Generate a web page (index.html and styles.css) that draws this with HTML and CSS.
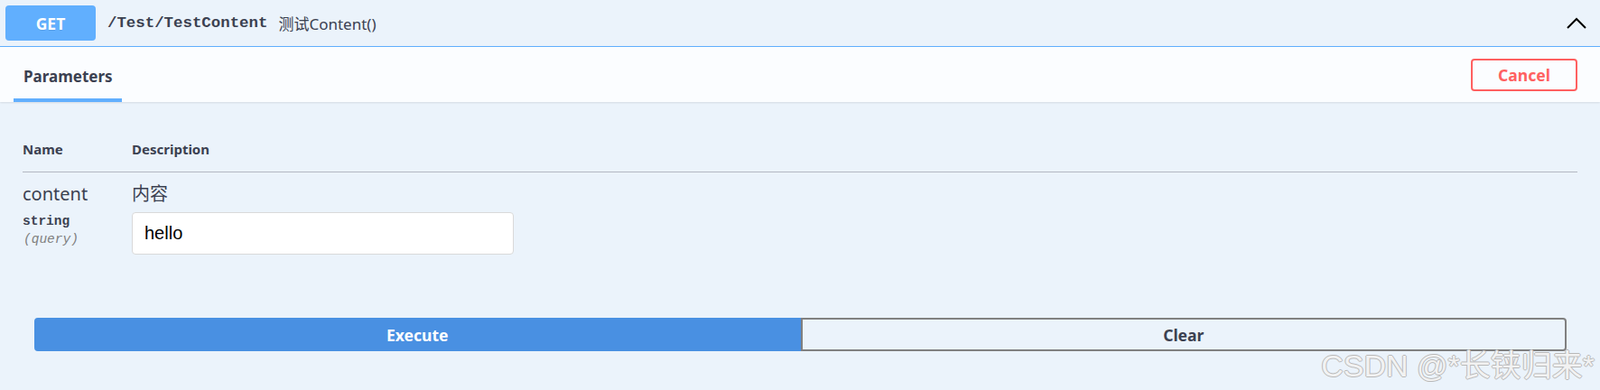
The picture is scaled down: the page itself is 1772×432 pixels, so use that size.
FILE: index.html
```html
<!DOCTYPE html>
<html lang="zh">
<head>
<meta charset="utf-8">
<title>Swagger - GET /Test/TestContent</title>
<link rel="stylesheet" href="styles.css">
</head>
<body>
<div class="opblock">
  <div class="summary">
    <span class="method">GET</span>
    <span class="path">/Test/TestContent</span>
    <span class="desc">测试Content()</span>
    <svg class="chev" width="22" height="13" viewBox="0 0 22 13" aria-hidden="true">
      <polyline points="1,12 11,2 21,12" fill="none" stroke="#000" stroke-width="2"/>
    </svg>
  </div>
  <div class="section-header">
    <div class="tab">Parameters</div>
    <button class="cancel">Cancel</button>
  </div>
  <div class="params">
    <div class="thead">
      <div class="col-name">Name</div>
      <div class="col-desc">Description</div>
    </div>
    <div class="row">
      <div class="col-name">
        <div class="pname">content</div>
        <div class="ptype">string</div>
        <div class="pin">(query)</div>
      </div>
      <div class="col-desc">
        <div class="pdesc">内容</div>
        <input class="pinput" type="text" value="hello">
      </div>
    </div>
  </div>
  <div class="btn-group">
    <button class="execute">Execute</button>
    <button class="clear">Clear</button>
  </div>
</div>
<div class="watermark">CSDN @*长铗归来*</div>
</body>
</html>
```
FILE: styles.css
```css
html, body {
  margin: 0;
  padding: 0;
}
body {
  background: #ebf3fb;
  font-family: "Noto Sans", "Noto Sans CJK SC", sans-serif;
  color: #3b4151;
  width: 1772px;
  height: 432px;
  overflow: hidden;
}
.opblock {
  display: flex;
  flex-direction: column;
}
.summary {
  display: flex;
  align-items: center;
  height: 51px;
  padding: 0 15px 0 6px;
  border-bottom: 1px solid #61affe;
}
.method {
  width: 100px;
  height: 39px;
  box-sizing: border-box;
  background: #61affe;
  color: #fff;
  border-radius: 4px;
  font-weight: 700;
  font-size: 17.5px;
  display: flex;
  align-items: center;
  justify-content: center;
  text-shadow: 0 1px 0 rgba(0,0,0,.1);
}
.path {
  font-family: "Liberation Mono", monospace;
  font-weight: 600;
  font-size: 17.4px;
  margin-left: 13px;
  color: #3b4151;
}
.desc {
  font-size: 17px;
  margin-left: 12px;
  flex: 1;
  color: #3b4151;
}
.chev {
  display: block;
  margin-top: -1px;
}
.section-header {
  display: flex;
  align-items: center;
  justify-content: space-between;
  height: 61px;
  padding: 0 25px 0 15px;
  background: #fbfdff;
  box-shadow: 0 1px 2px rgba(0,0,0,.1);
  position: relative;
}
.tab {
  align-self: stretch;
  box-sizing: border-box;
  padding: 7px 10px 0 11px;
  display: flex;
  align-items: center;
  border-bottom: 4px solid #61affe;
  font-weight: 700;
  font-size: 17px;
}
.cancel {
  width: 118px;
  height: 36px;
  box-sizing: border-box;
  border: 2px solid #ff6060;
  border-radius: 4px;
  background: transparent;
  color: #ff6060;
  font-family: inherit;
  font-weight: 700;
  font-size: 17.5px;
  padding: 0;
}
.params {
  padding: 0 25px;
}
.thead {
  display: flex;
  margin-top: 42px;
  padding-bottom: 15px;
  border-bottom: 1px solid #b3b8c1;
  font-weight: 700;
  font-size: 15px;
  line-height: 20px;
}
.col-name {
  width: 121px;
  flex: none;
}
.col-desc {
  flex: 1;
}
.row {
  display: flex;
  padding-top: 12px;
}
.pname {
  font-size: 20px;
  line-height: 24px;
}
.ptype {
  margin-top: 8px;
  font-family: "Liberation Mono", monospace;
  font-weight: 600;
  font-size: 14.5px;
  line-height: 20px;
}
.pin {
  font-family: "Liberation Mono", monospace;
  font-style: italic;
  font-size: 14.5px;
  line-height: 20px;
  color: #808080;
  padding-left: 1px;
}
.pdesc {
  font-size: 20px;
  line-height: 24px;
}
.pinput {
  display: block;
  margin: 8px 0 0;
  width: 423px;
  height: 47px;
  box-sizing: border-box;
  border: 1px solid #d9d9d9;
  border-radius: 4px;
  background: #fff;
  padding: 0 13px;
  font-family: "Liberation Sans", Arial, sans-serif;
  font-size: 20px;
  color: #000;
  outline: none;
}
.btn-group {
  display: flex;
  margin: 70px 37px 0 38px;
}
.btn-group button {
  flex: 1;
  height: 37px;
  box-sizing: border-box;
  font-family: inherit;
  font-weight: 700;
  font-size: 17.5px;
  padding: 0;
}
.execute {
  background: #4990e2;
  color: #fff;
  border: 2px solid #4990e2;
  border-radius: 4px 0 0 4px;
}
.clear {
  background: transparent;
  color: #3b4151;
  border: 2px solid #808080;
  border-radius: 0 4px 4px 0;
}
.watermark {
  position: absolute;
  right: 6px;
  bottom: 7px;
  font-family: "Liberation Sans", "Noto Sans CJK SC", sans-serif;
  font-size: 34px;
  line-height: 39px;
  color: #f2f2f2;
  text-shadow: 1px 0 #b8b8b8, -1px 0 #b8b8b8, 0 1px #b8b8b8, 0 -1px #b8b8b8;
  white-space: nowrap;
}
```
